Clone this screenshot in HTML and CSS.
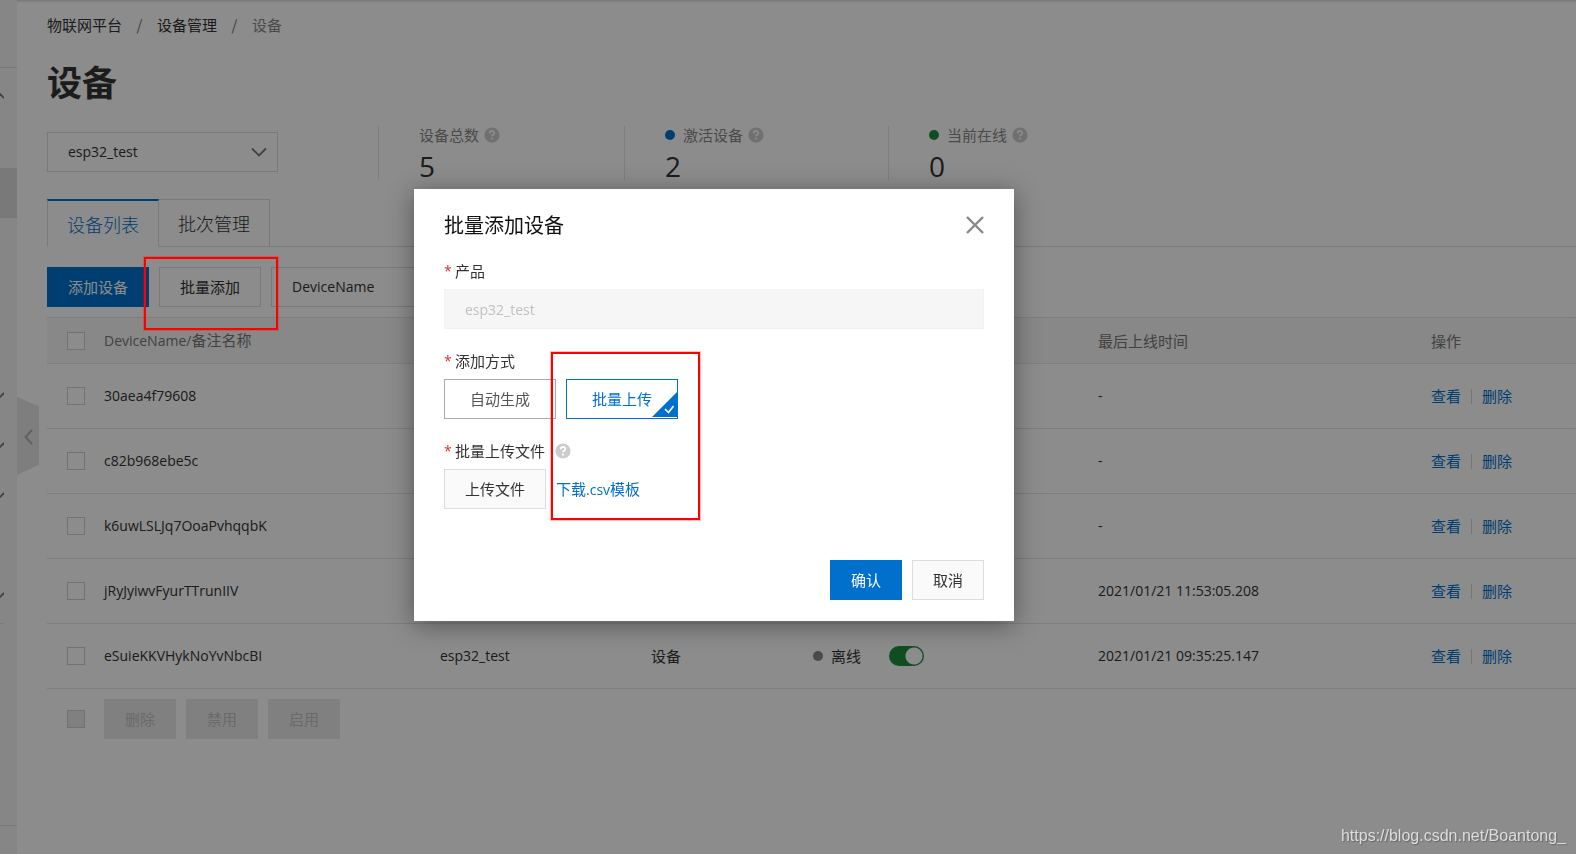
FILE: index.html
```html
<!DOCTYPE html>
<html lang="zh-CN">
<head>
<meta charset="utf-8">
<title>设备</title>
<link rel="stylesheet" href="styles.css">
</head>
<body>
<svg class="defs" aria-hidden="true">
  <symbol id="help" viewBox="0 0 16 16"><circle cx="8" cy="8" r="7.6" fill="#ccc"/><path d="M5.700 6.200C5.700 3.200 10.300 3.200 10.300 6c0 1.800-2.300 1.700-2.300 3.300" fill="none" stroke="#fff" stroke-width="1.700"/><circle cx="8" cy="11.600" r="1.100" fill="#fff"/></symbol>
  <symbol id="down" viewBox="0 0 16 10"><path d="M1 1.500l7 7 7-7" fill="none" stroke="#777" stroke-width="1.800"/></symbol>
  <symbol id="edge-down" viewBox="0 0 4 6"><path d="M-1 6l5-5" fill="none" stroke="#777" stroke-width="1.800"/></symbol>
  <symbol id="edge-up" viewBox="0 0 4 6"><path d="M-1 0l5 5" fill="none" stroke="#777" stroke-width="1.800"/></symbol>
</svg>
<div class="app">
  <aside class="sidebar">
    <div class="side-head"></div>
    <ul class="side-list">
      <li class="open"><svg><use href="#edge-up"/></svg></li>
      <li></li>
      <li class="current"></li>
      <li></li>
      <li></li>
      <li></li>
    </ul>
    <ul class="side-list side-groups">
      <li><svg><use href="#edge-down"/></svg></li>
      <li><svg><use href="#edge-down"/></svg></li>
      <li><svg><use href="#edge-down"/></svg></li>
      <li></li>
      <li><svg><use href="#edge-down"/></svg></li>
    </ul>
    <div class="side-rule"></div>
    <div class="side-foot"></div>
    <button class="collapse" type="button" aria-label="收起"><svg viewBox="0 0 9 16"><path d="M8 1L1.500 8 8 15" fill="none" stroke="#b0b0b0" stroke-width="2"/></svg></button>
  </aside>
  <main class="main">
    <nav class="crumbs"><a href="#">物联网平台</a><span class="sep">/</span><a href="#">设备管理</a><span class="sep">/</span><span class="here">设备</span></nav>
    <h1>设备</h1>
    <div class="summary">
      <div class="select product-select">
        <select aria-label="产品"><option>esp32_test</option></select>
        <svg><use href="#down"/></svg>
      </div>
      <div class="stat"><div class="stat-label">设备总数<svg class="help"><use href="#help"/></svg></div><div class="stat-value">5</div></div>
      <div class="stat stat-wide"><div class="stat-label"><i class="dot blue"></i>激活设备<svg class="help"><use href="#help"/></svg></div><div class="stat-value">2</div></div>
      <div class="stat"><div class="stat-label"><i class="dot green"></i>当前在线<svg class="help"><use href="#help"/></svg></div><div class="stat-value">0</div></div>
    </div>
    <div class="tabs">
      <button class="tab active" type="button">设备列表</button>
      <button class="tab" type="button">批次管理</button>
    </div>
    <div class="toolbar">
      <button class="btn primary" type="button">添加设备</button>
      <button class="btn" type="button">批量添加</button>
      <div class="select filter"><select aria-label="搜索类型"><option>DeviceName</option></select></div>
    </div>
    <table>
      <colgroup><col class="c-check"><col class="c-name"><col class="c-product"><col class="c-type"><col class="c-status"><col class="c-time"><col></colgroup>
      <thead>
        <tr><th><input type="checkbox" aria-label="全选"></th><th><span class="latin">DeviceName/</span>备注名称</th><th></th><th></th><th></th><th>最后上线时间</th><th>操作</th></tr>
      </thead>
      <tbody>
        <tr><td><input type="checkbox" aria-label="30aea4f79608"></td><td class="latin">30aea4f79608</td><td></td><td></td><td></td><td class="latin">-</td><td><div class="ops"><a href="#">查看</a><i></i><a href="#">删除</a></div></td></tr>
        <tr><td><input type="checkbox" aria-label="c82b968ebe5c"></td><td class="latin">c82b968ebe5c</td><td></td><td></td><td></td><td class="latin">-</td><td><div class="ops"><a href="#">查看</a><i></i><a href="#">删除</a></div></td></tr>
        <tr><td><input type="checkbox" aria-label="k6uwLSLJq7OoaPvhqqbK"></td><td class="latin">k6uwLSLJq7OoaPvhqqbK</td><td></td><td></td><td></td><td class="latin">-</td><td><div class="ops"><a href="#">查看</a><i></i><a href="#">删除</a></div></td></tr>
        <tr><td><input type="checkbox" aria-label="jRyJyiwvFyurTTrunIIV"></td><td class="latin">jRyJyiwvFyurTTrunIIV</td><td></td><td></td><td></td><td class="latin">2021/01/21 11:53:05.208</td><td><div class="ops"><a href="#">查看</a><i></i><a href="#">删除</a></div></td></tr>
        <tr><td><input type="checkbox" aria-label="eSuieKKVHykNoYvNbcBI"></td><td class="latin">eSuieKKVHykNoYvNbcBI</td><td class="latin">esp32_test</td><td>设备</td><td><div class="status"><i class="dot gray"></i>离线<input class="switch" type="checkbox" role="switch" aria-label="启用设备" checked></div></td><td class="latin">2021/01/21 09:35:25.147</td><td><div class="ops"><a href="#">查看</a><i></i><a href="#">删除</a></div></td></tr>
      </tbody>
    </table>
    <div class="batch">
      <input type="checkbox" aria-label="批量选择" disabled>
      <button class="btn" type="button" disabled>删除</button>
      <button class="btn" type="button" disabled>禁用</button>
      <button class="btn" type="button" disabled>启用</button>
    </div>
  </main>
</div>
<div class="mask"></div>
<section class="dialog" role="dialog" aria-labelledby="dialog-title">
  <header>
    <h2 id="dialog-title">批量添加设备</h2>
    <button class="close" type="button" aria-label="关闭"><svg viewBox="0 0 18 18"><path d="M1 1l16 16M17 1L1 17" fill="none" stroke="#888" stroke-width="2.400"/></svg></button>
  </header>
  <form>
    <div class="field">
      <label class="caption" for="product"><b>*</b>产品</label>
      <input id="product" class="text" type="text" value="esp32_test" disabled>
    </div>
    <div class="field">
      <div class="caption"><b>*</b>添加方式</div>
      <div class="row">
        <label class="choice"><input type="radio" name="mode">自动生成</label>
        <label class="choice chosen"><input type="radio" name="mode" checked>批量上传<svg viewBox="0 0 25 25"><path d="M25 0v25H0z" fill="#0070cc"/><path d="M13 17l3.500 3.500L21.500 14" fill="none" stroke="#fff" stroke-width="1.600"/></svg></label>
      </div>
    </div>
    <div class="field">
      <div class="caption"><b>*</b>批量上传文件<svg class="help"><use href="#help"/></svg></div>
      <div class="row"><button class="btn" type="button">上传文件</button><a href="#">下载<span class="latin">.csv</span>模板</a></div>
    </div>
    <footer>
      <button class="btn primary" type="button">确认</button>
      <button class="btn" type="button">取消</button>
    </footer>
  </form>
</section>
<div class="marker marker-add"></div>
<div class="marker marker-upload"></div>
<div class="watermark">https://blog.csdn.net/Boantong_</div>
</body>
</html>
```
FILE: styles.css
```css
* { box-sizing: border-box; }
body {
  margin: 0;
  color: #333;
  background: #fff;
  font: 400 15px/20px "Noto Sans CJK SC", sans-serif;
}
button, input, select { font: inherit; color: inherit; margin: 0; }
a { color: #0070cc; text-decoration: none; }
ul { list-style: none; margin: 0; padding: 0; }
.defs { position: absolute; width: 0; height: 0; }
.latin, select, .text { font-family: "Open Sans", sans-serif; font-size: 14px; }

.app { display: flex; min-height: 100vh; box-shadow: inset 0 3px 3px -2px #ccc; }

/* Sidebar */
.sidebar { position: relative; width: 17px; flex: none; display: flex; flex-direction: column; background: #f5f5f5; }
.side-head { height: 68px; border-bottom: 1px solid #ddd; }
.side-list li { height: 50px; display: flex; align-items: center; }
.side-list svg { width: 4px; height: 6px; }
.side-list .open { padding-top: 6px; }
.side-list .current { background: #ddd; }
.side-groups { padding-top: 2px; }
.side-rule { width: 4px; margin-top: 3px; border-top: 1px solid #ddd; }
.side-foot { height: 29px; margin-top: auto; border-top: 1px solid #ddd; }
.collapse { position: absolute; left: 17px; top: 397px; width: 22px; height: 78px; padding: 2px 0 0; border: 0; background: #e6e6e6; clip-path: polygon(0 0, 100% 12%, 100% 87%, 0 100%); }
.collapse svg { display: block; width: 9px; height: 16px; margin: 0 auto; }

/* Page */
.main { flex: 1; min-width: 0; padding: 15px 0 0 30px; }
.crumbs { display: flex; }
.crumbs a { color: #333; }
.sep { width: 35px; text-align: center; color: #777; }
.here { color: #888; }
h1 { margin: 20px 0 25px; font-size: 35px; line-height: 52px; font-weight: 700; }
.summary { display: flex; align-items: flex-start; height: 48px; }
.select { position: relative; height: 40px; border: 1px solid #ddd; }
.select select { width: 100%; height: 100%; padding: 0 20px; border: 0; background: transparent; appearance: none; }
.select svg { position: absolute; right: 10px; top: 14px; width: 16px; height: 10px; }
.product-select { width: 231px; margin-right: 100px; }
.stat { width: 246px; height: 54px; margin-top: -6px; padding-left: 40px; border-left: 1px solid #e6e6e6; }
.stat-wide { width: 264px; }
.stat-label { display: flex; align-items: center; height: 18px; color: #888; }
.help { width: 16px; height: 16px; margin-left: 5px; }
.stat-value { font: 28px/44px "Open Sans", sans-serif; }
.dot { width: 10px; height: 10px; margin-right: 8px; border-radius: 50%; }
.blue { background: #0070cc; }
.green { background: #1e8e3e; }
.gray { background: #888; }

.tabs { display: flex; margin-top: 19px; height: 48px; border-bottom: 1px solid #ddd; }
.tab { height: 48px; padding: 0 19px; border: 1px solid #ddd; border-left-width: 0; background: #fff; font-size: 18px; font-weight: 300; }
.tab.active { border-left-width: 1px; border-top: 2px solid #0070cc; border-bottom-color: #fff; color: #0070cc; }
.toolbar { display: flex; gap: 10px; margin: 20px 0 10px; }
.btn { height: 40px; padding: 0 20px; border: 1px solid #ddd; background: #fafafa; white-space: nowrap; }
.btn.primary { border-color: #0070cc; background: #0070cc; color: #fff; }
.btn:disabled { border-color: #eaeaea; background: #eaeaea; color: #c1c1c1; }
.app .btn:enabled:not(.primary) { background: #fff; }
.filter { width: 160px; }

table { width: 100%; table-layout: fixed; border-collapse: collapse; }
.c-check { width: 57px; }
.c-name { width: 336px; }
.c-product { width: 211px; }
.c-type { width: 162px; }
.c-status { width: 285px; }
.c-time { width: 333px; }
th, td { padding: 0; text-align: left; white-space: nowrap; border-bottom: 1px solid #e6e6e6; }
th { height: 46px; border-top: 1px solid #e6e6e6; background: #f7f7f7; color: #777; font-weight: 400; }
td { height: 65px; }
th:first-child, td:first-child { padding-left: 20px; }
input[type="checkbox"] { appearance: none; display: block; width: 18px; height: 18px; border: 1px solid #d0d0d0; background: #fff; }
input[type="checkbox"]:disabled { background: #eaeaea; }
.ops { display: flex; align-items: center; gap: 10px; }
.ops i { width: 1px; height: 15px; background: #d5d5d5; }
.status { display: flex; align-items: center; }
.status input.switch { width: 35px; height: 20px; margin-left: 28px; border: 0; border-radius: 10px; background: radial-gradient(circle at 25px 10px, #fff 8px, #1e8e3e 9px); }
.batch { display: flex; align-items: center; gap: 10px; padding: 10px 20px; }
.batch input { margin-right: 9px; }

/* Dialog */
.mask { position: fixed; inset: 0; background: rgba(0, 0, 0, .45); }
.dialog { position: absolute; left: 414px; top: 189px; width: 600px; padding: 26px 30px 21px; background: #fff; box-shadow: 0 4px 24px rgba(0, 0, 0, .4); }
.dialog header { display: flex; justify-content: space-between; align-items: center; height: 20px; margin-bottom: 26px; }
h2 { margin: 0; font-size: 20px; line-height: 20px; font-weight: 400; color: #111; }
.close { padding: 0; border: 0; background: none; }
.close svg { display: block; width: 18px; height: 18px; }
.field { margin-bottom: 22px; }
.caption { display: flex; align-items: center; height: 20px; margin-bottom: 8px; }
.caption b { width: 11px; color: #d93026; font: 14px/20px "Open Sans", sans-serif; }
.caption .help { margin-left: 10px; }
.text { display: block; width: 100%; height: 40px; padding: 0 20px; border: 1px solid #f2f2f2; background: #f6f6f6; }
.text:disabled { color: #c1c1c1; }
.row { display: flex; align-items: center; gap: 10px; }
.choice { position: relative; height: 40px; padding: 0 25px; border: 1px solid #aaa; line-height: 38px; color: #555; }
.choice input { position: absolute; opacity: 0; }
.choice.chosen { border-color: #0070cc; color: #0070cc; }
.choice svg { position: absolute; right: 0; bottom: 1px; width: 25px; height: 25px; }
.dialog footer { display: flex; justify-content: flex-end; gap: 10px; margin-top: 51px; }

/* Highlights */
.marker { position: absolute; border: 2px solid #f00; box-shadow: 0 0 0 1px rgba(255, 0, 0, .25); pointer-events: none; }
.marker-add { left: 144px; top: 257px; width: 134px; height: 73px; }
.marker-upload { left: 551px; top: 352px; width: 149px; height: 168px; }
.watermark { position: absolute; right: 10px; bottom: 8px; font: 16px/20px "Liberation Sans", Arial, sans-serif; color: #ddd; text-shadow: 1px 1px 1px #666; }
```
